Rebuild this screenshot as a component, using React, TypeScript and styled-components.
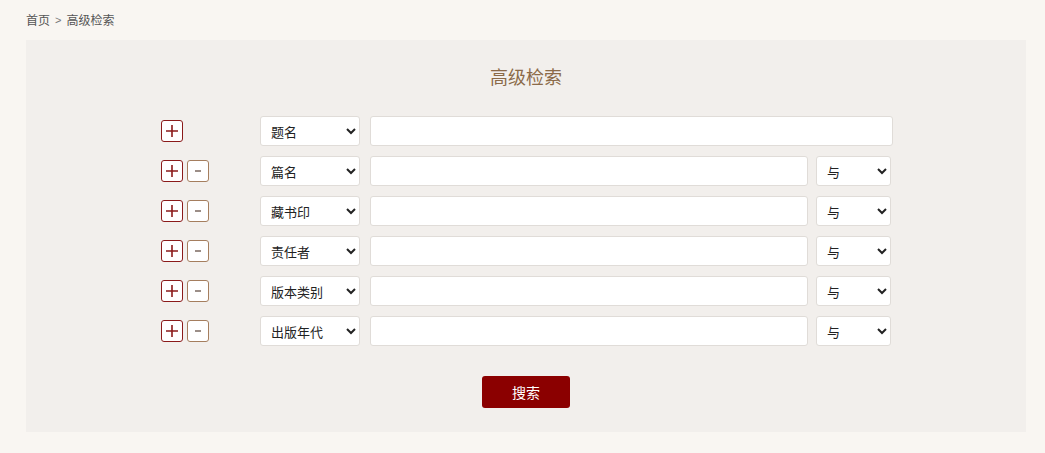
import React from 'react';
import styled, { createGlobalStyle } from 'styled-components';

const GlobalStyle = createGlobalStyle`
  body {
    margin: 0;
    background-color: #f9f6f2;
    font-family: 'Noto Sans CJK SC', 'Liberation Sans', sans-serif;
  }
`;

interface Field {
  label: string;
  first?: boolean;
}

const fields: Field[] = [
  { label: '题名', first: true },
  { label: '篇名' },
  { label: '藏书印' },
  { label: '责任者' },
  { label: '版本类别' },
  { label: '出版年代' },
];

const Page = styled.div`
  padding: 12px 19px 21px 26px;
`;

const Breadcrumb = styled.div`
  display: flex;
  align-items: center;
  gap: 5px;
  height: 16px;
  font-size: 12px;
  line-height: 16px;
  color: #555;
`;

const Sep = styled.span`
  font-family: 'Liberation Sans', sans-serif;
  font-size: 11px;
  color: #777;
`;

const Panel = styled.div`
  margin-top: 12px;
  width: 1000px;
  box-sizing: border-box;
  background-color: #f2efec;
  padding: 25px 0 24px;
  display: flex;
  flex-direction: column;
  align-items: center;
`;

const Title = styled.h2`
  margin: 0 0 29px;
  font-size: 18px;
  line-height: 22px;
  font-weight: normal;
  color: #8b6a48;
`;

const Rows = styled.div`
  width: 732px;
  margin-left: 2px;
  display: flex;
  flex-direction: column;
  gap: 10px;
`;

const Row = styled.div`
  display: flex;
  align-items: center;
  height: 30px;
`;

const Tools = styled.div`
  width: 99px;
  display: flex;
  gap: 4px;
`;

const IconButton = styled.button<{ $kind: 'add' | 'remove' }>`
  width: 22px;
  height: 22px;
  padding: 0;
  display: flex;
  align-items: center;
  justify-content: center;
  background: #fff;
  border: 1px solid ${({ $kind }) => ($kind === 'add' ? '#8b1a1a' : '#a57e5e')};
  border-radius: 3px;
  cursor: pointer;
`;

const Select = styled.select<{ $width: number }>`
  width: ${({ $width }) => $width}px;
  height: 30px;
  box-sizing: border-box;
  padding: 0 4px 0 6px;
  font-family: 'Noto Sans CJK SC', 'Liberation Sans', sans-serif;
  font-size: 13px;
  color: #222;
  background-color: #fff;
  border: 1px solid #e0dcd8;
  border-radius: 3px;
  outline: none;
`;

const Input = styled.input`
  flex: 1;
  height: 30px;
  box-sizing: border-box;
  margin: 0 8px 0 10px;
  padding: 0 8px;
  background: #fff;
  border: 1px solid #e0dcd8;
  border-radius: 3px;
  outline: none;

  &:last-child {
    margin-right: 0;
  }
`;

const LogicSelect = styled(Select)`
  margin-right: 2px;
`;

const SearchButton = styled.button`
  margin-top: 30px;
  width: 88px;
  height: 32px;
  border: none;
  border-radius: 3px;
  background-color: #8b0000;
  color: #fff;
  font-family: 'Noto Sans CJK SC', 'Liberation Sans', sans-serif;
  font-size: 14px;
  cursor: pointer;
`;

const Plus = () => (
  <svg width="14" height="14" viewBox="0 0 14 14">
    <path d="M7 1v12M1 7h12" stroke="#8b1a1a" strokeWidth="1.6" fill="none" />
  </svg>
);

const Minus = () => (
  <svg width="14" height="14" viewBox="0 0 14 14">
    <path d="M4 7h6" stroke="#5a4438" strokeWidth="1.2" fill="none" />
  </svg>
);

const App = () => {
  return (
    <>
      <GlobalStyle />
      <Page>
        <Breadcrumb>
          <span>首页</span>
          <Sep>&gt;</Sep>
          <span>高级检索</span>
        </Breadcrumb>
        <Panel>
          <Title>高级检索</Title>
          <Rows>
            {fields.map((f) => (
              <Row key={f.label}>
                <Tools>
                  <IconButton $kind="add">
                    <Plus />
                  </IconButton>
                  {!f.first && (
                    <IconButton $kind="remove">
                      <Minus />
                    </IconButton>
                  )}
                </Tools>
                <Select $width={100} defaultValue={f.label}>
                  {fields.map((o) => (
                    <option key={o.label}>{o.label}</option>
                  ))}
                </Select>
                <Input type="text" />
                {!f.first && (
                  <LogicSelect $width={75} defaultValue="与">
                    <option>与</option>
                    <option>或</option>
                    <option>非</option>
                  </LogicSelect>
                )}
              </Row>
            ))}
          </Rows>
          <SearchButton>搜索</SearchButton>
        </Panel>
      </Page>
    </>
  );
};

export default App;
